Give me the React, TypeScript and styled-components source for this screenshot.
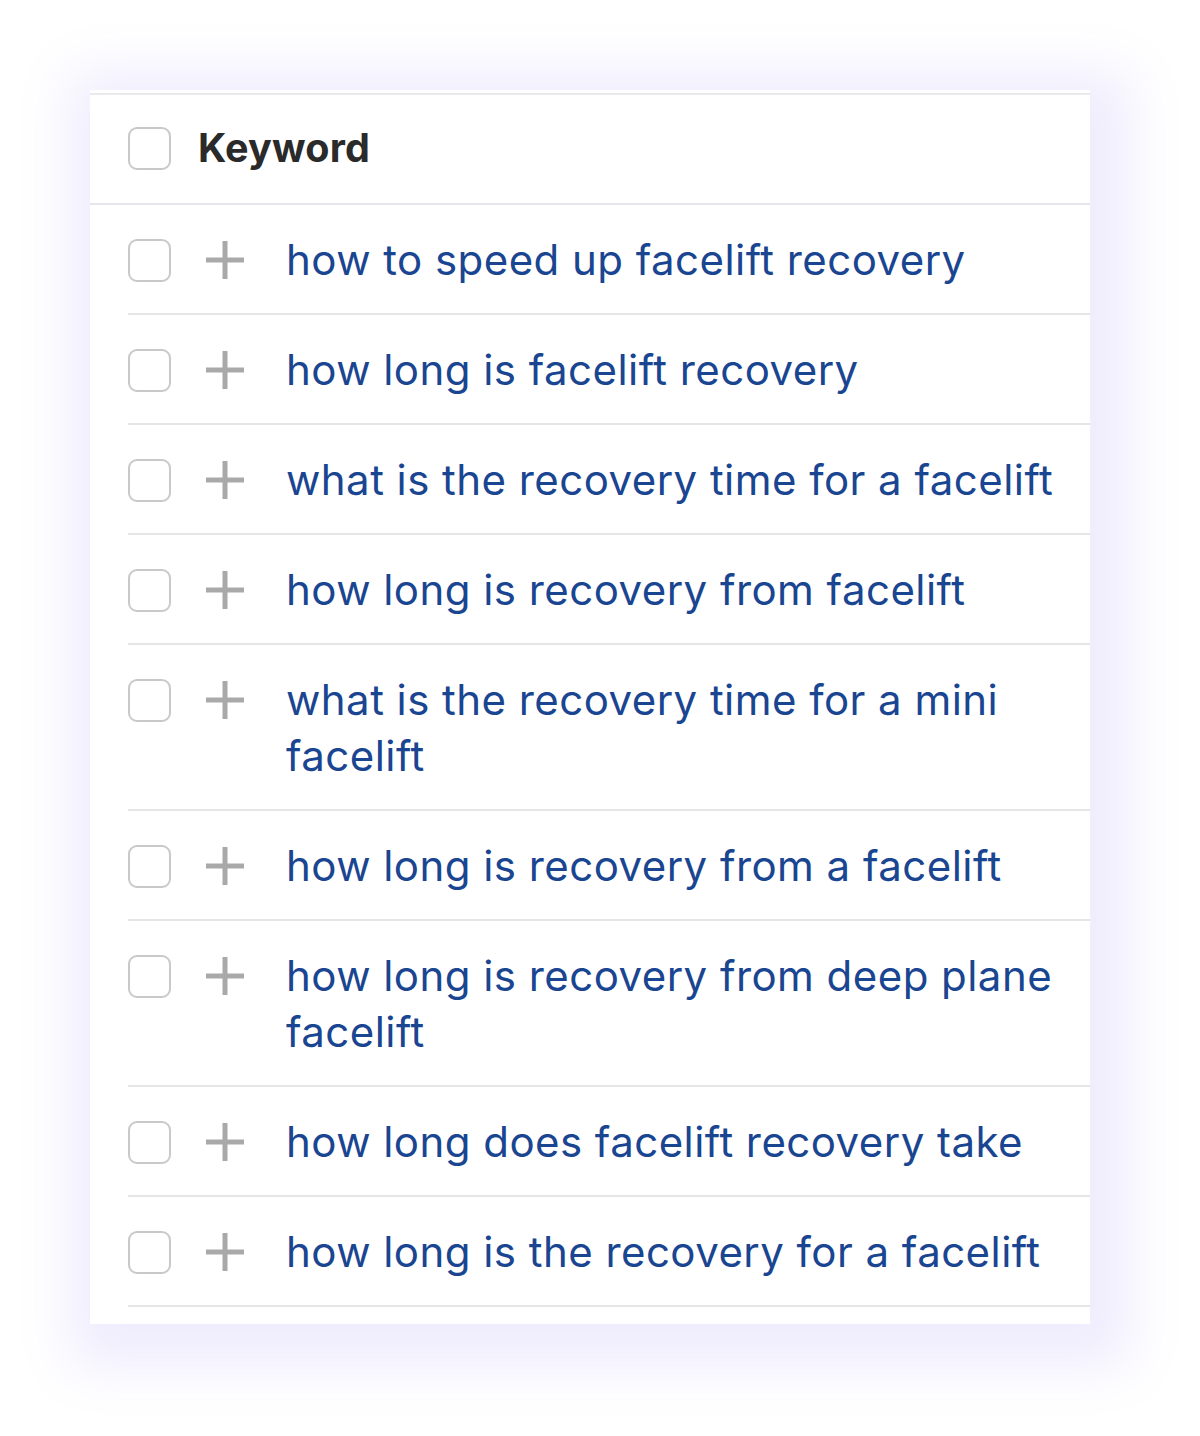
import React from "react";
import styled, { createGlobalStyle } from "styled-components";

const GlobalStyle = createGlobalStyle`
  html, body {
    margin: 0;
    padding: 0;
    background: #ffffff;
  }
  body {
    font-family: Inter, "Noto Sans", sans-serif;
  }
`;

const Page = styled.div`
  width: 1200px;
  height: 1436px;
  box-sizing: border-box;
  padding: 90px 110px 0 90px;
  overflow: hidden;
`;

const Card = styled.div`
  width: 1000px;
  box-sizing: border-box;
  padding: 3px 0 17px 0;
  background: #ffffff;
  box-shadow: 10px 12px 50px 30px rgba(132, 110, 236, 0.13);
`;

const HeaderRow = styled.div`
  height: 112px;
  box-sizing: border-box;
  display: flex;
  align-items: center;
  gap: 27px;
  padding-left: 38px;
  padding-bottom: 2px;
  border-top: 2px solid #e9e9ee;
  border-bottom: 2px solid #e6e6ea;
`;

const HeaderLabel = styled.span`
  font-size: 39.5px;
  font-weight: 700;
  color: #2a2a2a;
  letter-spacing: 0.2px;
`;

const Body = styled.div`
  padding-left: 38px;
`;

const Row = styled.div`
  display: flex;
  align-items: flex-start;
  padding: 27px 0 25px 0;
  border-bottom: 2px solid #e5e5e8;
`;

const Slot = styled.div`
  height: 56px;
  display: flex;
  align-items: center;
  flex-shrink: 0;
`;

const Check = styled.span`
  display: block;
  width: 43px;
  height: 43px;
  box-sizing: border-box;
  border: 2px solid #c9c9c9;
  border-radius: 9px;
  background: #ffffff;
`;

const PlusSlot = styled(Slot)`
  margin-left: 35px;
  margin-right: 42px;
`;

const KeywordText = styled.a`
  font-size: 42px;
  line-height: 56px;
  color: #1a4591;
  text-decoration: none;
  letter-spacing: 0.45px;
  max-width: 790px;
`;

const Plus = () => (
  <svg width="38" height="38" viewBox="0 0 38 38" aria-hidden="true">
    <rect x="16.5" y="0" width="5" height="38" fill="#a9a9a9" />
    <rect x="0" y="16.5" width="38" height="5" fill="#a9a9a9" />
  </svg>
);

const keywords = [
  "how to speed up facelift recovery",
  "how long is facelift recovery",
  "what is the recovery time for a facelift",
  "how long is recovery from facelift",
  "what is the recovery time for a mini facelift",
  "how long is recovery from a facelift",
  "how long is recovery from deep plane facelift",
  "how long does facelift recovery take",
  "how long is the recovery for a facelift",
];

const App = () => {
  return (
    <>
      <GlobalStyle />
      <Page>
        <Card>
          <HeaderRow>
            <Check />
            <HeaderLabel>Keyword</HeaderLabel>
          </HeaderRow>
          <Body>
            {keywords.map((k) => (
              <Row key={k}>
                <Slot>
                  <Check />
                </Slot>
                <PlusSlot>
                  <Plus />
                </PlusSlot>
                <KeywordText href="#">{k}</KeywordText>
              </Row>
            ))}
          </Body>
        </Card>
      </Page>
    </>
  );
};

export default App;
